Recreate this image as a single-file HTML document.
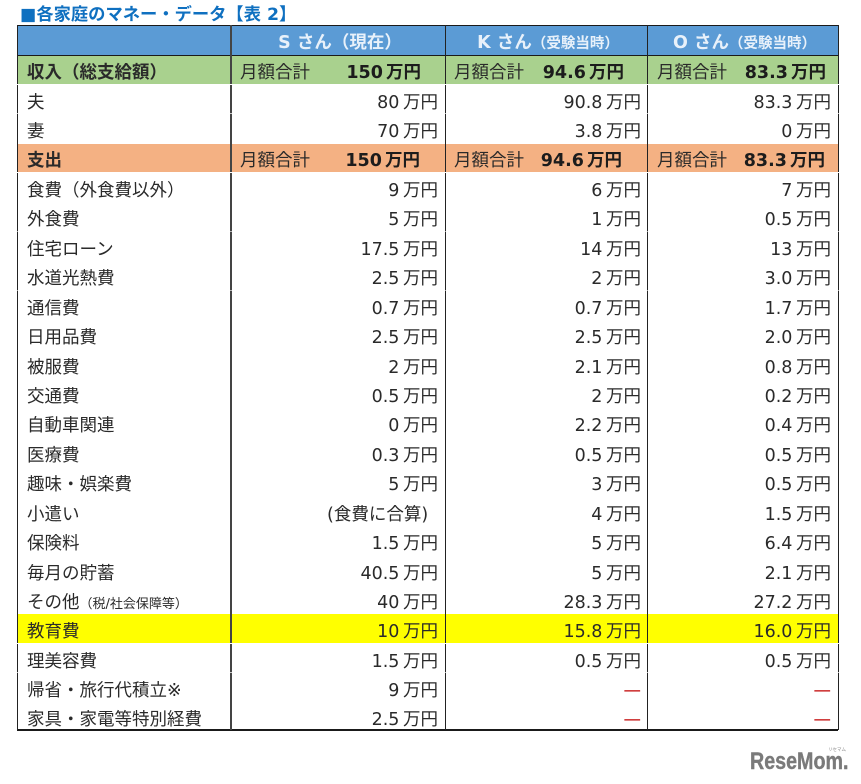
<!DOCTYPE html>
<html lang="ja"><head><meta charset="utf-8"><title>各家庭のマネー・データ</title>
<style>
html,body{margin:0;padding:0;background:#fff}
body{position:relative;width:861px;height:784px;overflow:hidden;font-family:"DejaVu Sans","Noto Sans CJK JP",sans-serif;font-size:17.5px;color:#2a2a2a}
.t{position:absolute;left:20px;top:3px;font-weight:700;font-size:17.3px;line-height:24px;color:#0f70c0;white-space:nowrap}
.r{position:absolute;left:17px;width:821px;word-spacing:-2px}
.r span{position:absolute;white-space:nowrap;line-height:26px;top:4.5px}
.l{left:10px}
.a,.b,.c{text-align:right}
.a{right:400px}.b{right:197px}.c{right:7px}
.hd{background:#5b9bd5;color:#e8f1fa;font-weight:700;font-size:17.5px;word-spacing:0}
.hd span{top:5px;text-align:center}
.hd small{font-size:14.5px}
.g{background:#a9d18e}.o{background:#f4b183}.y{background:#ff0}
.o span{top:3.5px}
.m1{left:223px}.m2{left:437px}.m3{left:640px}
.s1,.s2,.s3{font-weight:700;color:#1c1c1c;word-spacing:-3px}
.s1{right:417px}.s2{right:214px}.s3{right:12px}
.o .s1{right:418px}.o .s2{right:216px}.o .s3{right:13px}
.n{font-size:13px}
.d{color:#c00000}
.v{position:absolute;top:25px;height:705px;background:#444}
.h{position:absolute;left:17px;width:821px;height:1px;background:#1a1a1a}
.w{position:absolute;left:17px;width:822px;height:1px;background:#fff}
.logo{position:absolute;left:750px;top:747px;font-family:"Liberation Sans",sans-serif;font-weight:700;font-size:24px;line-height:30px;color:#7a7a7a;-webkit-text-stroke:.4px #7a7a7a;transform:scaleX(.82);transform-origin:left top;white-space:nowrap}
.kana{position:absolute;left:828px;top:748px;font-size:4.5px;line-height:5px;color:#888}
</style></head><body>
<div class="t">■各家庭のマネー・データ【表 2】</div>

<div class="r hd" style="top:25px;height:30px"><span style="left:216px;width:214px">S さん（現在）</span><span style="left:430px;width:202px">K さん<small>（受験当時）</small></span><span style="left:632px;width:191px">O さん<small>（受験当時）</small></span></div>
<div class="r g" style="top:55px;height:29px;font-size:17.5px"><span class="l" style="font-weight:700">収入（総支給額）</span><span class="m1">月額合計</span><span class="s1">150 万円</span><span class="m2">月額合計</span><span class="s2">94.6 万円</span><span class="m3">月額合計</span><span class="s3">83.3 万円</span></div>
<div class="r" style="top:85px;height:29px"><span class="l">夫</span><span class="a">80 万円</span><span class="b">90.8 万円</span><span class="c">83.3 万円</span></div>
<div class="r" style="top:114px;height:30px"><span class="l">妻</span><span class="a">70 万円</span><span class="b">3.8 万円</span><span class="c">0 万円</span></div>
<div class="r o" style="top:144px;height:28px"><span class="l" style="font-weight:700">支出</span><span class="m1">月額合計</span><span class="s1">150 万円</span><span class="m2">月額合計</span><span class="s2">94.6 万円</span><span class="m3">月額合計</span><span class="s3">83.3 万円</span></div>
<div class="r" style="top:173px;height:29px"><span class="l">食費（外食費以外）</span><span class="a">9 万円</span><span class="b">6 万円</span><span class="c">7 万円</span></div>
<div class="r" style="top:202px;height:29px"><span class="l">外食費</span><span class="a">5 万円</span><span class="b">1 万円</span><span class="c">0.5 万円</span></div>
<div class="r" style="top:232px;height:29px"><span class="l">住宅ローン</span><span class="a">17.5 万円</span><span class="b">14 万円</span><span class="c">13 万円</span></div>
<div class="r" style="top:261px;height:29px"><span class="l">水道光熱費</span><span class="a">2.5 万円</span><span class="b">2 万円</span><span class="c">3.0 万円</span></div>
<div class="r" style="top:291px;height:29px"><span class="l">通信費</span><span class="a">0.7 万円</span><span class="b">0.7 万円</span><span class="c">1.7 万円</span></div>
<div class="r" style="top:320px;height:29px"><span class="l">日用品費</span><span class="a">2.5 万円</span><span class="b">2.5 万円</span><span class="c">2.0 万円</span></div>
<div class="r" style="top:350px;height:29px"><span class="l">被服費</span><span class="a">2 万円</span><span class="b">2.1 万円</span><span class="c">0.8 万円</span></div>
<div class="r" style="top:379px;height:29px"><span class="l">交通費</span><span class="a">0.5 万円</span><span class="b">2 万円</span><span class="c">0.2 万円</span></div>
<div class="r" style="top:408px;height:29px"><span class="l">自動車関連</span><span class="a">0 万円</span><span class="b">2.2 万円</span><span class="c">0.4 万円</span></div>
<div class="r" style="top:438px;height:29px"><span class="l">医療費</span><span class="a">0.3 万円</span><span class="b">0.5 万円</span><span class="c">0.5 万円</span></div>
<div class="r" style="top:467px;height:29px"><span class="l">趣味・娯楽費</span><span class="a">5 万円</span><span class="b">3 万円</span><span class="c">0.5 万円</span></div>
<div class="r" style="top:497px;height:29px"><span class="l">小遣い</span><span style="left:310px">(食費に合算)</span><span class="b">4 万円</span><span class="c">1.5 万円</span></div>
<div class="r" style="top:526px;height:29px"><span class="l">保険料</span><span class="a">1.5 万円</span><span class="b">5 万円</span><span class="c">6.4 万円</span></div>
<div class="r" style="top:556px;height:29px"><span class="l">毎月の貯蓄</span><span class="a">40.5 万円</span><span class="b">5 万円</span><span class="c">2.1 万円</span></div>
<div class="r" style="top:585px;height:29px"><span class="l">その他<span class="n" style="position:static">（税/社会保障等）</span></span><span class="a">40 万円</span><span class="b">28.3 万円</span><span class="c">27.2 万円</span></div>
<div class="r y" style="top:614px;height:29px"><span class="l">教育費</span><span class="a">10 万円</span><span class="b">15.8 万円</span><span class="c">16.0 万円</span></div>
<div class="r" style="top:644px;height:29px"><span class="l">理美容費</span><span class="a">1.5 万円</span><span class="b">0.5 万円</span><span class="c">0.5 万円</span></div>
<div class="r" style="top:673px;height:29px"><span class="l">帰省・旅行代積立※</span><span class="a">9 万円</span><span class="b d">—</span><span class="c d">—</span></div>
<div class="r" style="top:702px;height:28px"><span class="l">家具・家電等特別経費</span><span class="a">2.5 万円</span><span class="b d">—</span><span class="c d">—</span></div>

<div class="h" style="top:25px"></div>
<div class="h" style="top:55px"></div>
<div class="h" style="top:729px;height:2px"></div>
<div class="v" style="left:17px;width:1px;background:#222"></div>
<div class="v" style="left:230px;width:2px"></div>
<div class="v" style="left:445px;width:1px;background:#222"></div>
<div class="v" style="left:647px;width:1px;background:#222"></div>
<div class="v" style="left:838px;width:1px;background:#222"></div>
<div class="w" style="top:84px"></div>
<div class="w" style="top:113px;opacity:.7"></div>
<div class="w" style="top:172px"></div>
<div class="w" style="top:231px;opacity:.6"></div>
<div class="w" style="top:290px;opacity:.6"></div>
<div class="w" style="top:643px"></div>
<div class="w" style="top:672px;opacity:.7"></div>

<div class="logo">ReseMom.</div>
<div class="kana">リセマム</div>
</body></html>
